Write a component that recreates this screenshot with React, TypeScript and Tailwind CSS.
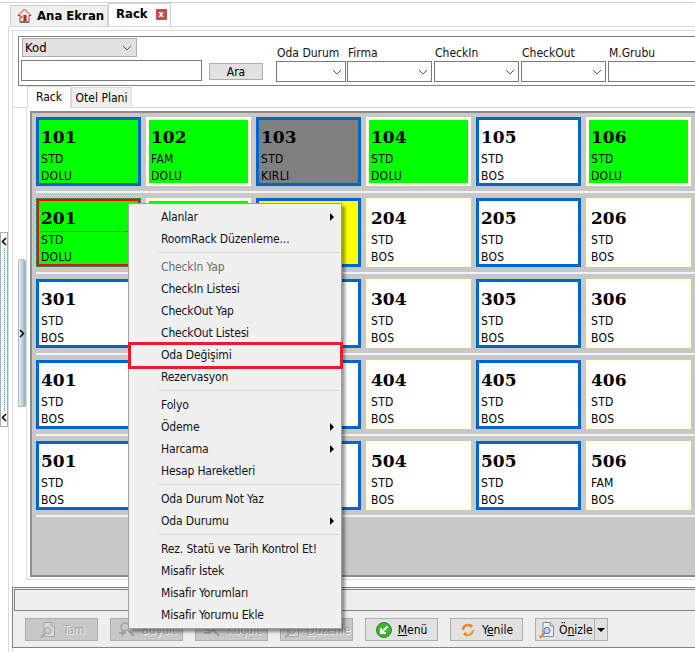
import type { ReactNode } from "react";

const ROWS = [
  [
    { no: "101", kind: "STD", state: "DOLU", bg: "bg-[#00ff00]" },
    { no: "102", kind: "FAM", state: "DOLU", bg: "bg-[#00ff00]" },
    { no: "103", kind: "STD", state: "KIRLI", bg: "bg-[#808080]" },
    { no: "104", kind: "STD", state: "DOLU", bg: "bg-[#00ff00]" },
    { no: "105", kind: "STD", state: "BOS", bg: "bg-white" },
    { no: "106", kind: "STD", state: "DOLU", bg: "bg-[#00ff00]" },
  ],
  [
    { no: "201", kind: "STD", state: "DOLU", bg: "bg-[#00ff00]", selected: true },
    { no: "202", kind: "STD", state: "DOLU", bg: "bg-[#00ff00]" },
    { no: "203", kind: "STD", state: "BOS", bg: "bg-[#ffff00]" },
    { no: "204", kind: "STD", state: "BOS", bg: "bg-white" },
    { no: "205", kind: "STD", state: "BOS", bg: "bg-white" },
    { no: "206", kind: "STD", state: "BOS", bg: "bg-white" },
  ],
  ["301", "302", "303", "304", "305", "306"].map((no) => ({ no, kind: "STD", state: "BOS", bg: "bg-white" })),
  ["401", "402", "403", "404", "405", "406"].map((no) => ({ no, kind: "STD", state: "BOS", bg: "bg-white" })),
  ["501", "502", "503", "504", "505", "506"].map((no) => ({
    no,
    kind: no === "506" ? "FAM" : "STD",
    state: "BOS",
    bg: "bg-white",
  })),
];

const MENU = [
  [{ label: "Alanlar", arrow: true }, { label: "RoomRack Düzenleme..." }],
  [
    { label: "CheckIn Yap", disabled: true },
    { label: "CheckIn Listesi" },
    { label: "CheckOut Yap" },
    { label: "CheckOut Listesi" },
    { label: "Oda Değişimi", marked: true },
    { label: "Rezervasyon" },
  ],
  [{ label: "Folyo" }, { label: "Ödeme", arrow: true }, { label: "Harcama", arrow: true }, { label: "Hesap Hareketleri" }],
  [{ label: "Oda Durum Not Yaz" }, { label: "Oda Durumu", arrow: true }],
  [
    { label: "Rez. Statü ve Tarih Kontrol Et!" },
    { label: "Misafir İstek" },
    { label: "Misafir Yorumları" },
    { label: "Misafir Yorumu Ekle" },
  ],
];

function Chevron({ className = "" }: { className?: string }) {
  return (
    <svg width="10" height="6" viewBox="0 0 10 6" className={className}>
      <path d="M1 1l4 4 4-4" fill="none" stroke="#5a5a5a" strokeWidth="1" />
    </svg>
  );
}

function Combo({ width, label }: { width: string; label: string }) {
  return (
    <div className={`flex flex-col ${width}`}>
      <span className="h-[15px] pl-[1px] pt-[1px] text-[12px] leading-[15px] text-[#111]">{label}</span>
      <div className="mt-[1px] flex h-[21px] items-center justify-end border border-[#7a7a7a] bg-white pr-[3px]">
        <Chevron />
      </div>
    </div>
  );
}

function Room({ no, kind, state, bg, blue, selected }: { no: string; kind: string; state: string; bg: string; blue: boolean; selected?: boolean }) {
  const edge = selected
    ? "border-[#ff0000] outline outline-1 outline-dotted -outline-offset-1 outline-[#40a0a0]"
    : blue
      ? "border-[#0066cc]"
      : "border-[#ffffe6]";
  return (
    <div className={`h-[69px] w-[105px] shrink-0 border-[3px] px-[2px] text-black ${edge} ${bg}`}>
      <div className="mt-[5px] h-[24px] font-['DejaVu_Serif'] text-[17px] font-bold leading-[24px] [font-stretch:normal]">
        {no}
      </div>
      <div className={`text-[12px] leading-[17px] tracking-[0.3px] ${selected ? "mt-[1px] border-t border-dotted border-[#7a1a7a]" : "mt-[2px]"}`}>{kind}</div>
      <div className="text-[12px] leading-[17px] tracking-[0.3px]">{state}</div>
    </div>
  );
}

function DocLens({ faded }: { faded?: boolean }) {
  return (
    <svg width="18" height="18" viewBox="0 0 18 18" className={faded ? "opacity-40" : ""}>
      <path d="M5 1.5h7l3.5 3.5v10.5H5z" fill="#eef0fa" stroke={faded ? "#777" : "#7d86b8"} />
      <path d="M12 1.5V5h3.5" fill="#cfd5ee" stroke={faded ? "#777" : "#7d86b8"} />
      <circle cx="9" cy="9.5" r="3.2" fill="#bcd4f2" stroke={faded ? "#777" : "#5d6f99"} />
      <path d="M6.6 12 1.8 16.8" stroke={faded ? "#777" : "#d9822b"} strokeWidth="2" />
    </svg>
  );
}

function ZoomIcon({ sign }: { sign: "plus" | "minus" }) {
  return (
    <svg width="19" height="18" viewBox="0 0 19 18" className="opacity-40">
      <circle cx="8" cy="6" r="4" fill="none" stroke="#666" strokeWidth="1.4" />
      <path d="M11 9l6 6" stroke="#666" strokeWidth="2" />
      <path d={sign === "plus" ? "M2 12h7M5.5 8.5v7" : "M2 12h7"} stroke="#666" strokeWidth="2" />
    </svg>
  );
}

function ToolButton({ icon, children, off }: { icon: ReactNode; children: ReactNode; off?: boolean }) {
  return (
    <div
      className={`flex h-[23px] w-[73px] shrink-0 items-center justify-center gap-[6px] border border-[#adadad] text-[12px] ${
        off ? "bg-[#c8c8c8] text-[#a6a6a6] [text-shadow:1px_1px_0_#efefef]" : "bg-[#e1e1e1] text-black"
      }`}
    >
      {icon}
      <span>{children}</span>
    </div>
  );
}

export default function App() {
  return (
    <div className="relative flex h-[652px] w-[695px] flex-col overflow-hidden bg-white font-['DejaVu_Sans',sans-serif] [font-stretch:condensed]">
      <div className="mt-[2px] h-px shrink-0 bg-[#d0d0d0]" />
      <div className="flex min-h-0 flex-1">
        {/* left collapse strip */}
        <div className="w-[8px] shrink-0 pt-[229px]">
          <div className="flex h-[195px] w-[8px] flex-col items-center justify-between border border-[#adadad] bg-white py-[4px]">
            <svg width="6" height="9" viewBox="0 0 6 9" className="shrink-0">
              <path d="M5 1 1.5 4.5 5 8" fill="none" stroke="#000" strokeWidth="1.5" />
            </svg>
            <div className="my-[2px] flex-1 border-l border-dotted border-[#2f8fd8]" />
            <svg width="6" height="9" viewBox="0 0 6 9" className="shrink-0">
              <path d="M5 1 1.5 4.5 5 8" fill="none" stroke="#000" strokeWidth="1.5" />
            </svg>
          </div>
        </div>

        <div className="flex min-w-0 flex-1 flex-col">
          {/* page tabs */}
          <div className="flex h-[23px] shrink-0 items-end pl-[2px]">
            <div className="flex h-[21px] w-[98px] items-center gap-[5px] border border-b-0 border-[#d0d0d0] bg-[#f0f0f0] pl-[6px] text-[13px] font-bold text-black">
              <svg width="15" height="16" viewBox="0 0 15 16">
                <path d="M7.5 1 1 7.5h2V14h9V7.5h2z" fill="#f5e6df" stroke="#c0392b" />
                <rect x="3" y="13" width="9" height="2" fill="#777" />
                <rect x="6.5" y="7" width="3" height="6" fill="#d0202a" />
                <rect x="3.8" y="7.5" width="1.6" height="2.5" fill="#7a7a7a" />
              </svg>
              Ana Ekran
            </div>
            <div className="flex h-[23px] w-[63px] items-center gap-[8px] border border-b-0 border-[#d0d0d0] bg-white pb-[2px] pl-[7px] text-[13px] font-bold text-black">
              Rack
              <div className="flex h-[11px] w-[11px] items-center justify-center bg-[#c0504d] text-[9px] leading-none text-white">x</div>
            </div>
          </div>

          <div className="flex min-h-0 flex-1 flex-col border-l border-t border-[#d9d9d9] pl-[3px] pt-[3px]">
            <div className="flex min-h-0 flex-1 flex-col border-l border-t border-[#d9d9d9] pb-[4px] pt-[5px]">
              {/* filter box */}
              <div className="ml-[5px] flex h-[50px] shrink-0 border border-r-0 border-[#808080] pl-[2px] pt-[1px]">
                <div className="flex w-[181px] shrink-0 flex-col">
                  <div className="ml-[1px] flex h-[19px] w-[115px] items-center justify-between border border-[#adadad] bg-[#e1e1e1] pl-[2px] pr-[4px] text-[13px] text-black">
                    Kod
                    <Chevron />
                  </div>
                  <div className="mt-[3px] h-[21px] border border-[#7a7a7a] bg-white" />
                </div>
                <div className="ml-[7px] mt-[25px] flex h-[17px] w-[54px] shrink-0 items-center justify-center border border-[#adadad] bg-[#e1e1e1] text-[12px]">
                  Ara
                </div>
                <div className="ml-[13px] flex min-w-0 flex-1 gap-[2px] pt-[7px]">
                  <Combo width="w-[70px] shrink-0 -mr-[1px]" label="Oda Durum" />
                  <Combo width="w-[85px] shrink-0" label="Firma" />
                  <Combo width="w-[85px] shrink-0" label="CheckIn" />
                  <Combo width="w-[85px] shrink-0" label="CheckOut" />
                  <div className="flex w-[100px] shrink-0 flex-col">
                    <span className="h-[15px] pl-[1px] pt-[1px] text-[12px] leading-[15px] text-[#111]">M.Grubu</span>
                    <div className="mt-[1px] h-[21px] border border-r-0 border-[#7a7a7a] bg-white" />
                  </div>
                </div>
              </div>

              {/* rack tabs */}
              <div className="flex h-[22px] shrink-0 items-end border-b border-[#d9d9d9] pl-[14px]">
                <div className="-mb-px flex h-[22px] w-[44px] items-center justify-center border border-b-0 border-[#d9d9d9] bg-white pb-[1px] text-[12px]">Rack</div>
                <div className="flex h-[20px] w-[61px] items-center justify-center border border-b-0 border-[#d9d9d9] bg-[#f0f0f0] text-[12px]">Otel Plani</div>
              </div>

              <div className="flex min-h-0 flex-1 pl-[5px]">
                {/* splitter */}
                <div className="w-[8px] shrink-0 pt-[151px]">
                  <div className="flex h-[148px] w-[8px] items-center justify-center rounded-t-[3px] border border-[#b4b4b4] bg-gradient-to-r from-[#eef3f6] to-[#8fb2c9]">
                    <svg width="6" height="9" viewBox="0 0 6 9" className="shrink-0">
                      <path d="M1 1l3.5 3.5L1 8" fill="none" stroke="#000" strokeWidth="1.5" />
                    </svg>
                  </div>
                </div>
                <div className="flex h-[472px] min-w-0 flex-1 flex-col border-b border-l border-[#d9d9d9] pl-[3px] pt-[3px]">
                  <div className="flex h-[466px] min-w-0 flex-col border-b-2 border-l-2 border-t-2 border-[#8c8c8c] bg-[#c8c8c8] pl-[4px] pt-[4px]">
                    {ROWS.map((row, r) => (
                      <div key={r} className="mb-[5px] flex flex-col">
                        <div className="flex gap-[5px]">
                          {row.map((room, c) => (
                            <Room key={room.no} {...room} blue={c % 2 === 0} />
                          ))}
                        </div>
                        <div className="mt-[5px] h-[2px] bg-[#f2f2f2]" />
                      </div>
                    ))}
                  </div>
                </div>
              </div>

              {/* footer */}
              <div className="-ml-px flex h-[61px] shrink-0 flex-col border-b border-l border-t border-[#808080] bg-[#eeeeee] pl-[1px] pt-[1px]">
                <div className="h-[22px] border border-r-0 border-[#808080] bg-[#eeeeee]" />
                <div className="ml-[11px] mt-[7px] flex gap-[12px]">
                  <ToolButton off icon={<DocLens faded />}>Tam</ToolButton>
                  <ToolButton off icon={<ZoomIcon sign="plus" />}>Büyült</ToolButton>
                  <ToolButton off icon={<ZoomIcon sign="minus" />}>Küçült</ToolButton>
                  <ToolButton off icon={<DocLens faded />}>
                    <u>D</u>üzenle
                  </ToolButton>
                  <ToolButton
                    icon={
                      <svg width="16" height="16" viewBox="0 0 16 16">
                        <circle cx="8" cy="8" r="7.5" fill="#3fb52e" stroke="#2a8a1f" />
                        <path d="M11.5 4.5 5.5 10.5M5 6v5h5" fill="none" stroke="#fff" strokeWidth="2" />
                      </svg>
                    }
                  >
                    <u>M</u>enü
                  </ToolButton>
                  <ToolButton
                    icon={
                      <svg width="16" height="16" viewBox="0 0 16 16">
                        <path d="M3 8a5 5 0 0 1 8-4" fill="none" stroke="#e8862a" strokeWidth="2.4" />
                        <path d="M13 8a5 5 0 0 1-8 4" fill="none" stroke="#e8a040" strokeWidth="2.4" />
                        <path d="M9.5 1.5l3.5 2-2.5 3zM6.5 14.5l-3.5-2 2.5-3z" fill="#e8862a" />
                      </svg>
                    }
                  >
                    Y<u>e</u>nile
                  </ToolButton>
                  <div className="flex">
                    <div className="flex h-[23px] w-[60px] items-center gap-[3px] border border-[#adadad] bg-[#e1e1e1] pl-[2px] text-[12px]">
                      <DocLens />
                      <span>
                        Ö<u>n</u>izle
                      </span>
                    </div>
                    <div className="flex h-[23px] w-[13px] items-center justify-center border border-l-0 border-[#adadad] bg-[#e1e1e1]">
                      <div className="h-0 w-0 border-x-[4px] border-t-[4px] border-x-transparent border-t-black" />
                    </div>
                  </div>
                </div>
              </div>
            </div>
          </div>
        </div>
      </div>

      {/* context menu */}
      <div className="absolute left-[128px] top-[203px] w-[214px] border border-[#a0a0a0] bg-[#f0f0f0] py-[2px] text-[12px] tracking-[-0.15px] text-[#10101a] shadow-[3px_3px_3px_rgba(0,0,0,0.4)]">
        {MENU.map((group, g) => (
          <div key={g}>
            {g > 0 && <div className="my-[2px] ml-[30px] mr-[2px] h-[2px] border-t border-[#d7d7d7]" />}
            {group.map((item: { label: string; arrow?: boolean; disabled?: boolean; marked?: boolean }) => (
              <div key={item.label} className={`relative flex h-[22px] items-center justify-between pl-[32px] pr-[7px] ${item.disabled ? "text-[#6d6d6d]" : ""}`}>
                {item.label}
                {item.arrow && <div className="h-0 w-0 border-y-[4px] border-l-[4px] border-y-transparent border-l-black" />}
                {item.marked && <div className="absolute -left-px -right-[2px] -top-[2px] bottom-[-3px] border-[3px] border-[#ed1c24]" />}
              </div>
            ))}
          </div>
        ))}
      </div>
    </div>
  );
}
